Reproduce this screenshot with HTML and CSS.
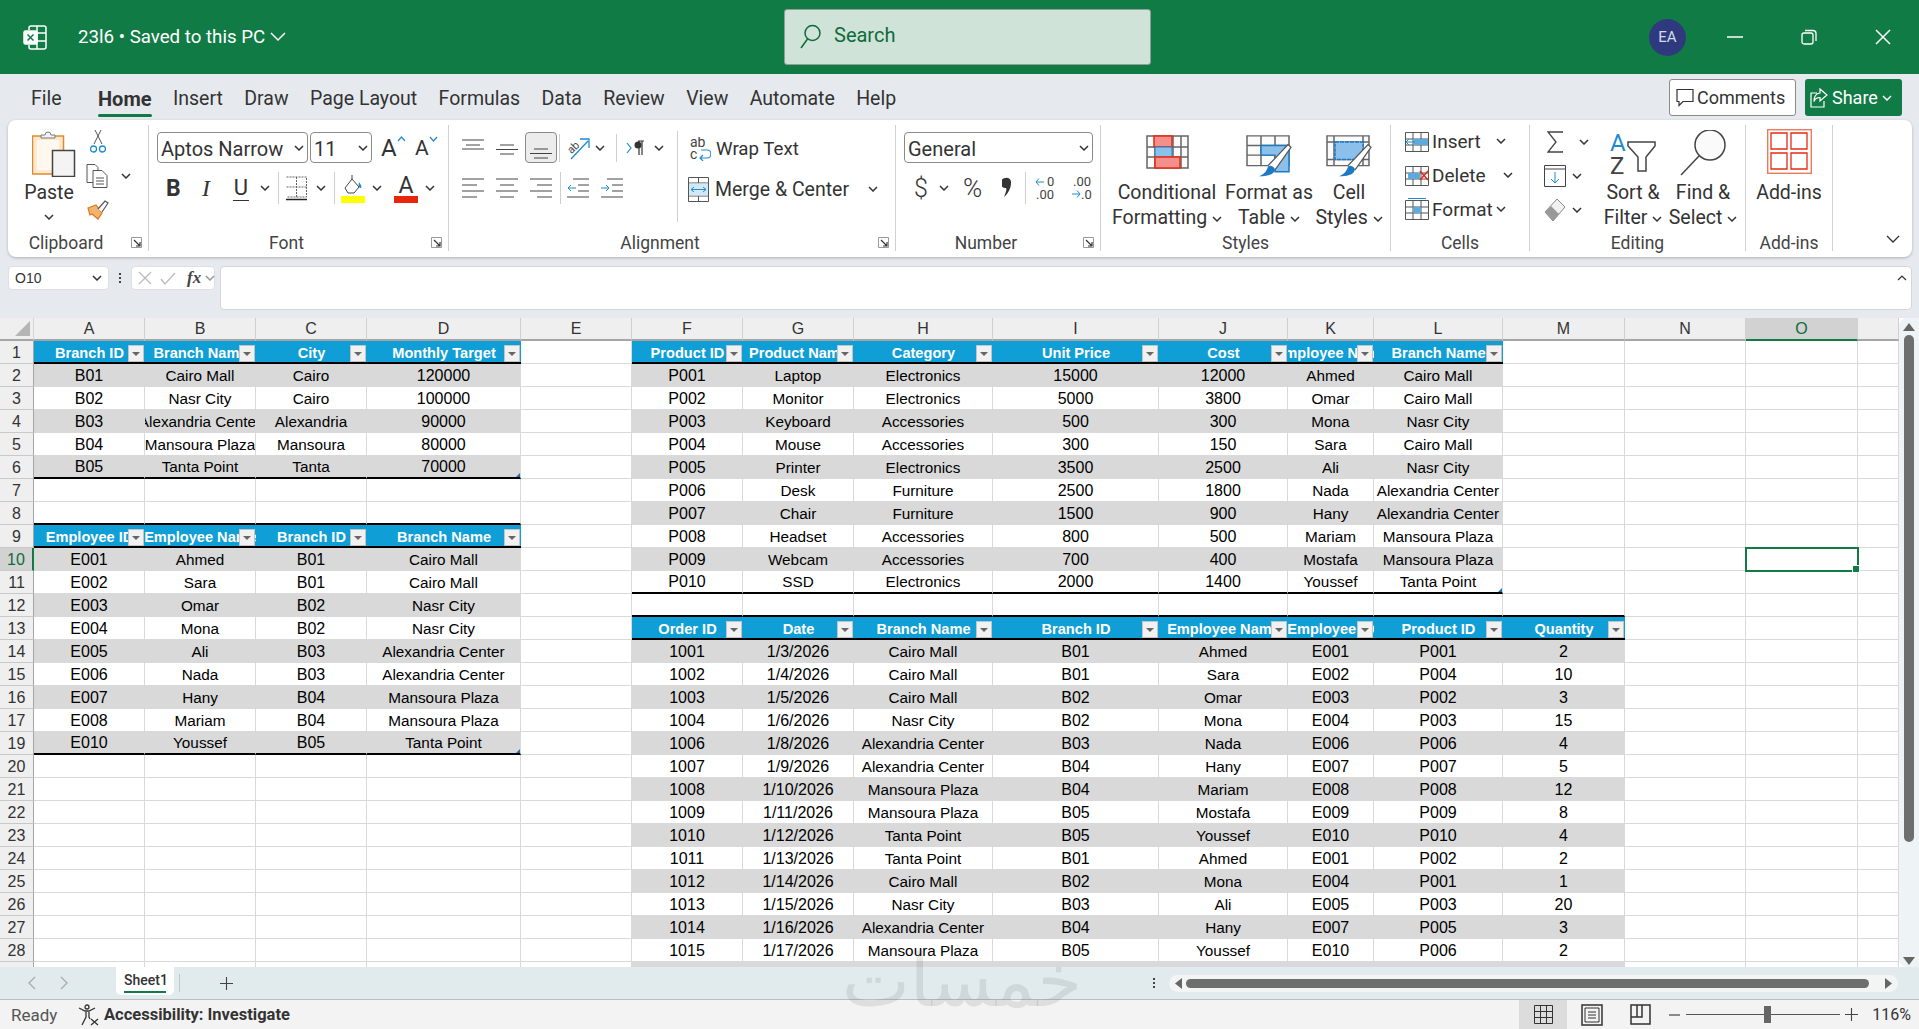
FILE: index.html
```html
<!DOCTYPE html>
<html lang="en">
<head>
    <meta charset="UTF-8">
    <meta name="viewport" content="width=device-width, initial-scale=1.0">
    <title>2316 - Excel</title>
    <link rel="stylesheet" href="styles.css">
</head>
<body>
    <svg class="sprite" xmlns="http://www.w3.org/2000/svg">
        <symbol id="chev" viewBox="0 0 10 6"><path d="M1 1l4 4 4-4" fill="none" stroke="#333" stroke-width="1.5"/></symbol>
        <symbol id="launch" viewBox="0 0 11 11"><path d="M.5 10.5V.5h10v10z" fill="none" stroke="#999"/><path d="M3 3l6 6M9 5v4H5" fill="none" stroke="#333" stroke-width="1.2"/></symbol>
        <symbol id="a-top" viewBox="0 0 22 11"><path d="M0 1h22M4 6h14" stroke="#444" fill="none"/><path d="M0 10h22" stroke="#444"/></symbol>
        <symbol id="a-mid" viewBox="0 0 22 11"><path d="M4 1h14M0 5.500h22M4 10h14" stroke="#444" fill="none"/></symbol>
        <symbol id="a-left" viewBox="0 0 22 20"><path d="M0 1h22M0 7h15M0 13h22M0 19h15" stroke="#444" fill="none"/></symbol>
        <symbol id="a-center" viewBox="0 0 22 20"><path d="M0 1h22M4 7h14M0 13h22M4 19h14" stroke="#444" fill="none"/></symbol>
        <symbol id="a-right" viewBox="0 0 22 20"><path d="M0 1h22M7 7h15M0 13h22M7 19h15" stroke="#444" fill="none"/></symbol>
        <symbol id="a-out" viewBox="0 0 22 20"><path d="M6 1h16M11 7h11M11 13h11M0 19h22" stroke="#444" fill="none"/><path d="M9 10H1M4 7l-3 3 3 3" stroke="#1e8bcd" fill="none"/></symbol>
        <symbol id="a-in" viewBox="0 0 22 20"><path d="M6 1h16M11 7h11M11 13h11M0 19h22" stroke="#444" fill="none"/><path d="M0 10h8M5 7l3 3-3 3" stroke="#1e8bcd" fill="none"/></symbol>
        <symbol id="grid-cell" viewBox="0 0 24 24"><path d="M.5 3.500h23v19H.5zM.5 10h23M.5 16h23M8 3.500v19M16 3.500v19" fill="#fff" stroke="#555"/></symbol>
    </svg>

    <header class="titlebar">
        <div class="title-left">
            <svg class="excel-logo" width="24" height="25" viewBox="0 0 24 25" fill="none" stroke="#fff" stroke-width="1.5"><path d="M6 5V3a2 2 0 0 1 2-2h13a2 2 0 0 1 2 2v19a2 2 0 0 1-2 2H8a2 2 0 0 1-2-2v-2M14 1v23M14 8h9M14 16h9"/><rect x="1" y="6" width="13" height="13" rx="1.500" fill="#fff"/><path d="M4.500 9.500l6 6M10.500 9.500l-6 6" stroke="#117b45"/></svg>
            <span class="doc-name">23l6 • Saved to this PC</span>
            <svg class="doc-chev" width="16" height="10" viewBox="0 0 16 10"><path d="M1 1l7 7 7-7" fill="none" stroke="#fff" stroke-width="1.500"/></svg>
        </div>
        <div class="search">
            <svg width="21" height="25" viewBox="0 0 21 25" fill="none" stroke="#0f6b3a" stroke-width="1.5"><circle cx="12.500" cy="9" r="7.500"/><path d="M7.500 15L1 24"/></svg>
            <span>Search</span>
        </div>
        <div class="title-right">
            <div class="avatar">EA</div>
            <svg class="min-btn" width="16" height="2"><path d="M0 1h16" stroke="#fff" stroke-width="1.500"/></svg>
            <svg class="win-btn" width="16" height="16" viewBox="0 0 16 16" fill="none" stroke="#fff" stroke-width="1.300"><rect x="1" y="4" width="11" height="11" rx="2"/><path d="M4 1.500h8a3 3 0 0 1 3 3V12"/></svg>
            <svg class="win-btn" width="16" height="16" viewBox="0 0 16 16"><path d="M1 1l14 14M15 1L1 15" stroke="#fff" stroke-width="1.500"/></svg>
        </div>
    </header>

    <nav class="tabs">
        <span class="tab tab-file">File</span>
        <span class="tab tab-active">Home</span>
        <span class="tab">Insert</span>
        <span class="tab">Draw</span>
        <span class="tab">Page Layout</span>
        <span class="tab">Formulas</span>
        <span class="tab">Data</span>
        <span class="tab">Review</span>
        <span class="tab">View</span>
        <span class="tab">Automate</span>
        <span class="tab">Help</span>
        <div class="tab-actions">
            <div class="btn-comments">
                <svg width="18" height="20" viewBox="0 0 18 20" fill="none" stroke="#333" stroke-width="1.200"><path d="M1 1.500h16v12H7l-4 4v-4H1z"/></svg>
                <span>Comments</span>
            </div>
            <div class="btn-share">
                <svg width="18" height="20" viewBox="0 0 18 20" fill="none" stroke="#fff" stroke-width="1.200"><path d="M7 5H1v14h13v-6M10 1l7 6-7 6V9.500c-3 0-5 1-6 4 0-5 2-8 6-8.500z"/></svg>
                <span>Share</span>
                <svg width="10" height="6"><use href="#chev" class="on-green"/></svg>
            </div>
        </div>
    </nav>

    <section class="ribbon">
        <div class="group g-clip launcher-group">
            <div class="group-body body-flat">
                <div class="big-btn paste">
                    <svg class="big-icon paste-icon" width="44" height="47" viewBox="0 0 44 47"><rect x=".5" y="6" width="31" height="38" fill="#fde9cf" stroke="#e08a2e" stroke-width="1.500"/><rect x="5" y="10" width="22" height="30" fill="#fff8ee"/><path d="M9 8V5h4a3 3 0 0 1 6 0h4v3z" fill="#f3f3f3" stroke="#777"/><rect x="20.500" y="20.500" width="22" height="26" fill="#f4f4f4" stroke="#444" stroke-width="1.500"/></svg>
                    <span>Paste</span>
                    <svg class="paste-chev" width="10" height="6"><use href="#chev"/></svg>
                </div>
                <div class="small-col">
                    <div class="small-row">
                        <svg class="ml10" width="16" height="24" viewBox="0 0 16 24" fill="none"><path d="M4 14L11 0M12 14L5 0" stroke="#555"/><circle cx="3.500" cy="19" r="3" stroke="#1e8bcd" stroke-width="1.300"/><circle cx="12.500" cy="19" r="3" stroke="#1e8bcd" stroke-width="1.300"/></svg>
                    </div>
                    <div class="small-row">
                        <svg class="ml6" width="22" height="24" viewBox="0 0 22 24" fill="#fff" stroke="#555"><path d="M1 .5h8l3 3v15H1z"/><path d="M7 6.500h9l5 5v12H7z"/><path d="M10 14h8M10 17h8M10 20h8"/></svg>
                        <svg class="ml13" width="10" height="6"><use href="#chev"/></svg>
                    </div>
                    <div class="small-row">
                        <svg class="ml7" width="22" height="20" viewBox="0 0 22 20" fill="none"><path d="M1 8l8-3 6 8-4 6-6-5-2 1z" fill="#f4b26f" stroke="#d9791f" stroke-width="1.200"/><path d="M11 9l7-8 3 2-6 9" fill="#fff" stroke="#555" stroke-width="1.200"/></svg>
                    </div>
                </div>
            </div>
            <div class="group-label">Clipboard<svg class="launcher" width="11" height="11"><use href="#launch"/></svg></div>
        </div>

        <div class="group g-font launcher-group">
            <div class="group-body">
                <div class="tool-row">
                    <div class="combo combo-font ml8"><span>Aptos Narrow</span><svg width="10" height="6"><use href="#chev"/></svg></div>
                    <div class="combo combo-size ml2"><span>11</span><svg width="10" height="6"><use href="#chev"/></svg></div>
                    <span class="grow-a ml9">A<svg class="mark" width="9" height="6" viewBox="0 0 9 6"><path d="M1 5l3.500-4L8 5" fill="none" stroke="#1e8bcd" stroke-width="1.200"/></svg></span>
                    <span class="shrink-a ml14">A<svg class="mark" width="9" height="6" viewBox="0 0 9 6"><path d="M1 1l3.500 4L8 1" fill="none" stroke="#1e8bcd" stroke-width="1.200"/></svg></span>
                </div>
                <div class="tool-row row-two">
                    <span class="glyph-b ml17">B</span>
                    <span class="glyph-i ml22">I</span>
                    <span class="glyph-u ml21">U</span>
                    <svg class="ml11" width="10" height="6"><use href="#chev"/></svg>
                    <i class="sep ml8"></i>
                    <svg class="ml7" width="21" height="25" viewBox="0 0 21 25" fill="none"><path d="M.5 1h20v20H.5M10.500 1v20M.5 11h20" stroke="#666" stroke-dasharray="2 1"/><path d="M0 23.500h21" stroke="#222" stroke-width="1.500"/></svg>
                    <svg class="ml9" width="10" height="6"><use href="#chev"/></svg>
                    <i class="sep ml8"></i>
                    <svg class="ml6" width="24" height="29" viewBox="0 0 24 29"><path d="M4 14l7-9 7 8-5 6H7z" fill="#fff" stroke="#444"/><path d="M11 5V1" stroke="#444"/><path d="M18 8c2 3 3 4 2 6-2 0-3-2-2-6z" fill="#1e8bcd"/><rect y="22" width="24" height="7" fill="#ff0"/></svg>
                    <svg class="ml7" width="10" height="6"><use href="#chev"/></svg>
                    <span class="glyph-color ml12">A</span>
                    <svg class="ml7" width="10" height="6"><use href="#chev"/></svg>
                </div>
            </div>
            <div class="group-label">Font<svg class="launcher" width="11" height="11"><use href="#launch"/></svg></div>
        </div>

        <div class="group g-align launcher-group">
            <div class="group-body body-flat">
                <div class="align-left">
                    <div class="tool-row">
                        <svg class="ml13 up8" width="22" height="11"><use href="#a-top"/></svg>
                        <svg class="ml12 down1" width="22" height="11"><use href="#a-mid"/></svg>
                        <div class="active-box ml7"><svg width="22" height="11"><use href="#a-mid"/></svg></div>
                        <i class="sep sep-short ml2"></i>
                        <svg class="ml7" width="23" height="24" viewBox="0 0 23 24" fill="none"><text x="1" y="14" class="ab-text" transform="rotate(-45 8 12)">ab</text><path d="M4 23L21 5M13 3h9v9" stroke="#1e8bcd" stroke-width="1.300"/></svg>
                        <svg class="ml5" width="10" height="6"><use href="#chev"/></svg>
                        <i class="sep sep-short ml11"></i>
                        <svg class="ml9" width="19" height="16" viewBox="0 0 19 16" fill="none"><path d="M1 3l4 5-4 5" stroke="#1e8bcd" stroke-width="1.200"/><path d="M12 1h6M13 1v14M16 1v14" stroke="#333" stroke-width="1.200"/><circle cx="12" cy="5" r="3.500" fill="#333"/></svg>
                        <svg class="ml9" width="10" height="6"><use href="#chev"/></svg>
                    </div>
                    <div class="tool-row row-two">
                        <svg class="ml13" width="22" height="20"><use href="#a-left"/></svg>
                        <svg class="ml12" width="22" height="20"><use href="#a-center"/></svg>
                        <svg class="ml12" width="22" height="20"><use href="#a-right"/></svg>
                        <i class="sep ml8"></i>
                        <svg class="ml6" width="22" height="20"><use href="#a-out"/></svg>
                        <svg class="ml12" width="22" height="20"><use href="#a-in"/></svg>
                    </div>
                </div>
                <i class="sep sep-tall"></i>
                <div class="align-right">
                    <div class="tool-row wrap-row">
                        <svg class="ml12" width="21" height="24" viewBox="0 0 21 24" fill="none"><text x="0" y="10" class="wrap-text">ab</text><text x="0" y="22" class="wrap-text">c</text><path d="M11 13h6a4 4 0 0 1 0 8h-6M13 18l-3 3 3 3" stroke="#1e8bcd" stroke-width="1.200"/></svg>
                        <span class="wrap-label ml5">Wrap Text</span>
                    </div>
                    <div class="tool-row merge-row">
                        <svg class="ml10" width="21" height="25" viewBox="0 0 21 25" fill="none"><path d="M.5.5h20v24H.5zM.5 6h20M.5 19h20M10.500.5V6M10.500 19v5" stroke="#555"/><rect x="1" y="6.500" width="19" height="12" fill="#d3e8f7"/><path d="M3 12.500h15M6 10l-3 2.500L6 15M15 10l3 2.500-3 2.500" stroke="#1e8bcd"/></svg>
                        <span class="merge-text ml6">Merge &amp; Center</span>
                        <svg class="ml17" width="10" height="6"><use href="#chev"/></svg>
                    </div>
                </div>
            </div>
            <div class="group-label">Alignment<svg class="launcher" width="11" height="11"><use href="#launch"/></svg></div>
        </div>

        <div class="group g-number launcher-group">
            <div class="group-body">
                <div class="tool-row">
                    <div class="combo combo-num ml8"><span>General</span><svg width="10" height="6"><use href="#chev"/></svg></div>
                </div>
                <div class="tool-row row-two">
                    <span class="glyph-num glyph-dollar ml18">$</span>
                    <svg class="ml14" width="10" height="6"><use href="#chev"/></svg>
                    <span class="glyph-num glyph-pct ml14">%</span>
                    <svg class="ml19" width="10" height="22" viewBox="0 0 10 22"><path d="M3 1a4.500 4.500 0 0 1 6 5c0 5-3 11-7 14 2-5 3-8 2-9a4.500 4.500 0 0 1-1-10z" fill="#333"/></svg>
                    <i class="sep ml13"></i>
                    <svg class="ml9" width="21" height="26" viewBox="0 0 21 26" fill="none"><path d="M9 7H1M4 3.500L1 7l3 3.500" stroke="#1e8bcd"/><text x="12" y="11" class="dec-text">0</text><text x="1" y="24" class="dec-text">.00</text></svg>
                    <svg class="ml15" width="21" height="26" viewBox="0 0 21 26" fill="none"><text x="2" y="11" class="dec-text">.00</text><path d="M1 19h8M6 15.500l3 3.500-3 3.500" stroke="#1e8bcd"/><text x="10" y="24" class="dec-text">.0</text></svg>
                </div>
            </div>
            <div class="group-label">Number<svg class="launcher" width="11" height="11"><use href="#launch"/></svg></div>
        </div>

        <div class="group g-styles">
            <div class="group-body big-row">
                <div class="big-btn btn-cond">
                    <svg class="big-icon mt3" width="43" height="34" viewBox="0 0 43 34" fill="none"><path d="M1 1h41v32H1zM1 12h41M1 22h41M9 1v32M27 1v32M35 1v32" stroke="#666" stroke-width="1.500" fill="#fbfbfb"/><rect x="8" y="1" width="18" height="11" fill="#f58f8a" stroke="#e52b13" stroke-width="1.500"/><rect x="9" y="12" width="17" height="10" fill="#8bc0ea" stroke="#1e78c2"/><rect x="9" y="22" width="25" height="11" fill="#f58f8a" stroke="#e52b13" stroke-width="1.500"/></svg>
                    <span>Conditional</span>
                    <span>Formatting <svg width="10" height="6"><use href="#chev"/></svg></span>
                </div>
                <div class="big-btn btn-format">
                    <svg class="big-icon mt3" width="46" height="42" viewBox="0 0 46 48" preserveAspectRatio="none" fill="none"><path d="M1 1h42v34H1zM1 12h42M1 23h42M15 1v34M29 1v34" stroke="#666" stroke-width="1.500" fill="#fbfbfb"/><path d="M15 12h28v30H29V23H15z" fill="#8bc0ea" stroke="#1e78c2" stroke-width="1.500"/><path d="M22 35l20-24 3 3-16 26" fill="#fff" stroke="#555" stroke-width="1.300"/><path d="M13 47c7 0 15-1 16-8-1-3-5-5-7-3-1 5-4 9-9 11z" fill="#1e78c2"/></svg>
                    <span>Format as</span>
                    <span>Table <svg width="10" height="6"><use href="#chev"/></svg></span>
                </div>
                <div class="big-btn btn-cell">
                    <svg class="big-icon mt3" width="46" height="42" viewBox="0 0 46 48" preserveAspectRatio="none" fill="none"><path d="M1 1h42v34H1zM1 8h42M1 28h42M8 1v34M37 1v34" stroke="#666" stroke-width="1.500" fill="#fbfbfb"/><rect x="9" y="8" width="28" height="20" fill="#8bc0ea" stroke="#1e78c2" stroke-width="1.500" stroke-dasharray="4 1"/><path d="M22 35l20-24 3 3-16 26" fill="#fff" stroke="#555" stroke-width="1.300"/><path d="M13 47c7 0 15-1 16-8-1-3-5-5-7-3-1 5-4 9-9 11z" fill="#1e78c2"/></svg>
                    <span>Cell</span>
                    <span>Styles <svg width="10" height="6"><use href="#chev"/></svg></span>
                </div>
            </div>
            <div class="group-label">Styles</div>
        </div>

        <div class="group g-cells">
            <div class="group-body body-list">
                <div class="small-row">
                    <svg class="ml14" width="24" height="24" viewBox="0 0 24 24"><use href="#grid-cell" width="24" height="24"/><rect x="8" y="10" width="15" height="6" fill="#5ea9dd"/><path d="M10 13H1M4 10l-3 3 3 3" fill="none" stroke="#1e8bcd"/></svg>
                    <span class="cell-text t-short ml3">Insert</span>
                    <svg width="10" height="6"><use href="#chev"/></svg>
                </div>
                <div class="small-row">
                    <svg class="ml14" width="24" height="24" viewBox="0 0 24 24"><use href="#grid-cell" width="24" height="24"/><rect x="3" y="10" width="12" height="6" fill="#5ea9dd"/><path d="M15 8l8 9M23 8l-8 9" fill="none" stroke="#e52b13" stroke-width="1.500"/></svg>
                    <span class="cell-text t-long ml3">Delete</span>
                    <svg width="10" height="6"><use href="#chev"/></svg>
                </div>
                <div class="small-row">
                    <svg class="ml14" width="24" height="24" viewBox="0 0 24 24"><use href="#grid-cell" width="24" height="24"/><rect x="8" y="10" width="8" height="6" fill="#5ea9dd"/><path d="M3 1.500h18" stroke="#1e8bcd"/></svg>
                    <span class="cell-text t-short ml3">Format</span>
                    <svg width="10" height="6"><use href="#chev"/></svg>
                </div>
            </div>
            <div class="group-label">Cells</div>
        </div>

        <div class="group g-edit">
            <div class="group-body body-flat">
                <div class="small-col col-edit">
                    <div class="small-row">
                        <svg class="ml17" width="16" height="22" viewBox="0 0 16 22" fill="none"><path d="M16 2V1H1l8 10-8 10h15v-1" stroke="#444" stroke-width="1.300"/></svg>
                        <svg class="ml16" width="10" height="6"><use href="#chev"/></svg>
                    </div>
                    <div class="small-row">
                        <svg class="ml14" width="22" height="22" viewBox="0 0 22 22" fill="none"><path d="M.5.5h21v21H.5zM.5 4h21" stroke="#444"/><path d="M11 7v11M7 14l4 4 4-4" stroke="#1e8bcd"/></svg>
                        <svg class="ml6" width="10" height="6"><use href="#chev"/></svg>
                    </div>
                    <div class="small-row">
                        <svg class="ml14" width="22" height="24" viewBox="0 0 22 24"><path d="M1 14L13 1l8 8L9 23z" fill="#f1f1f1" stroke="#888"/><path d="M1 14l6-6 8 8-6 7z" fill="#999"/></svg>
                        <svg class="ml6" width="10" height="6"><use href="#chev"/></svg>
                    </div>
                </div>
                <div class="big-btn btn-sort">
                    <svg class="big-icon up2" width="46" height="44" viewBox="0 0 46 44" fill="none"><text x="0" y="21" class="sort-a">A</text><text x="0" y="44" class="sort-z">Z</text><path d="M18 12h27v4l-9 11v14h-8V27l-10-11z" stroke="#444" stroke-width="1.500"/></svg>
                    <span>Sort &amp;</span>
                    <span>Filter <svg width="10" height="6"><use href="#chev"/></svg></span>
                </div>
                <div class="big-btn btn-find">
                    <svg class="big-icon up2" width="46" height="46" viewBox="0 0 46 46"><circle cx="30" cy="15" r="15" fill="#fafafa" stroke="#444" stroke-width="1.500"/><path d="M19 26L1 45" stroke="#444" stroke-width="1.500"/></svg>
                    <span>Find &amp;</span>
                    <span>Select <svg width="10" height="6"><use href="#chev"/></svg></span>
                </div>
            </div>
            <div class="group-label">Editing</div>
        </div>

        <div class="group g-addins">
            <div class="group-body big-row">
                <div class="big-btn btn-addins">
                    <svg class="big-icon up3" width="45" height="45" viewBox="0 0 45 45" fill="none"><rect x=".7" y=".7" width="43.600" height="43.600" stroke="#ec7a58" stroke-width="1.400"/><path d="M4 4h16v16H4zM24 4h16v16H24zM4 24h16v16H4zM24 24h16v16H24z" stroke="#e52b13" stroke-width="1.300"/></svg>
                    <span>Add-ins</span>
                </div>
            </div>
            <div class="group-label">Add-ins</div>
        </div>

        <div class="ribbon-end">
            <svg width="14" height="8" viewBox="0 0 14 8"><path d="M1 1l6 6 6-6" fill="none" stroke="#333" stroke-width="1.300"/></svg>
        </div>
    </section>

    <section class="formula-bar">
        <div class="name-box"><span>O10</span><svg width="10" height="6"><use href="#chev"/></svg></div>
        <div class="fx-dots"><i></i><i></i><i></i></div>
        <div class="fx-box">
            <svg width="14" height="14" viewBox="0 0 14 14"><path d="M1 1l12 12M13 1L1 13" stroke="#bbb" stroke-width="1.300"/></svg>
            <svg class="ml8" width="16" height="13" viewBox="0 0 16 13"><path d="M1 7l4 5L15 1" fill="none" stroke="#bbb" stroke-width="1.300"/></svg>
            <span class="fx-text">fx</span>
            <svg class="fx-chev" width="10" height="6"><use href="#chev"/></svg>
        </div>
        <div class="formula-input">
            <svg width="10" height="6" viewBox="0 0 10 6"><path d="M1 5l4-4 4 4" fill="none" stroke="#333" stroke-width="1.200"/></svg>
        </div>
    </section>

    <main class="sheet-wrap">
        <div class="sheet" id="sheet"></div>
        <div class="vscroll">
            <svg width="12" height="8" viewBox="0 0 12 8"><path d="M6 0l6 8H0z" fill="#666"/></svg>
            <div class="vthumb"></div>
            <svg class="vdown" width="12" height="8" viewBox="0 0 12 8"><path d="M6 8l6-8H0z" fill="#666"/></svg>
        </div>
    </main>

    <section class="sheet-tabs">
        <svg class="ml28" width="8" height="14" viewBox="0 0 8 14"><path d="M7 1L1 7l6 6" fill="none" stroke="#aaa" stroke-width="1.300"/></svg>
        <svg class="ml24" width="8" height="14" viewBox="0 0 8 14"><path d="M1 1l6 6-6 6" fill="none" stroke="#aaa" stroke-width="1.300"/></svg>
        <div class="sheet-tab"><span>Sheet1</span></div>
        <i class="tab-sep"></i>
        <svg class="tab-plus" width="13" height="13" viewBox="0 0 13 13"><path d="M6.500 0v13M0 6.500h13" stroke="#444" stroke-width="1.100"/></svg>
        <div class="fx-dots tab-dots"><i></i><i></i><i></i></div>
        <div class="hscroll">
            <svg width="7" height="11" viewBox="0 0 7 11"><path d="M0 5.500L7 0v11z" fill="#666"/></svg>
            <div class="hthumb"></div>
            <svg width="7" height="11" viewBox="0 0 7 11"><path d="M7 5.500L0 0v11z" fill="#666"/></svg>
        </div>
    </section>

    <footer class="statusbar">
        <span class="ready">Ready</span>
        <svg class="ml21" width="22" height="22" viewBox="0 0 22 22" fill="none" stroke="#333" stroke-width="1.300"><circle cx="9" cy="3" r="2"/><path d="M1 4l6 3h4l6-3M8 8v5l-4 8M11 8v5l1 2"/><path d="M13 15l7 6M20 15l-7 6"/></svg>
        <span class="a11y">Accessibility: Investigate</span>
        <div class="status-right">
            <div class="view-cell">
                <svg width="19" height="19" viewBox="0 0 19 19" fill="none" stroke="#333"><path d="M.5.5h18v18H.5zM6.500.5v18M12.500.5v18M.5 6.500h18M.5 12.500h18"/></svg>
            </div>
            <svg class="view-page" width="22" height="22" viewBox="0 0 22 22" fill="none" stroke="#333"><path d="M1 1h20v20H1z" stroke-width="1.500"/><path d="M4 4h14v14H4zM7 8h8M7 11h8M7 14h8"/></svg>
            <svg class="view-break" width="21" height="21" viewBox="0 0 21 21" fill="none" stroke="#333" stroke-width="1.500"><path d="M1 1h19v19H1zM1 13h11V1M7 1v12"/></svg>
            <svg class="zoom-minus" width="11" height="2"><path d="M0 1h11" stroke="#444" stroke-width="1.200"/></svg>
            <div class="zoom-track"><i></i></div>
            <svg class="zoom-plus" width="13" height="13" viewBox="0 0 13 13"><path d="M6.500 0v13M0 6.500h13" stroke="#444" stroke-width="1.100"/></svg>
            <span class="zoom-pct">116%</span>
        </div>
    </footer>

    <div class="watermark">خمسات</div>

    <script src="script.js"></script>
</body>
</html>
```

FILE: styles.css
```css
* {
    box-sizing: border-box;
}
html, body {
    margin: 0;
    height: 100%;
}
body {
    width: 1919px;
    height: 1029px;
    overflow: hidden;
    position: relative;
    display: flex;
    flex-direction: column;
    background: #e6eaee;
    color: #333;
    font-family: Roboto, sans-serif;
    font-size: 18px;
}
svg {
    flex: none;
    display: block;
}
i {
    display: block;
}
.sprite {
    position: absolute;
    width: 0;
    height: 0;
}
.on-green {
    filter: brightness(0) invert(1);
}

/* spacing helpers */
.ml2 { margin-left: 2px; }
.ml3 { margin-left: 3px; }
.ml5 { margin-left: 5px; }
.ml6 { margin-left: 6px; }
.ml7 { margin-left: 7px; }
.ml8 { margin-left: 8px; }
.ml9 { margin-left: 9px; }
.ml10 { margin-left: 10px; }
.ml11 { margin-left: 11px; }
.ml12 { margin-left: 12px; }
.ml13 { margin-left: 13px; }
.ml14 { margin-left: 14px; }
.ml15 { margin-left: 15px; }
.ml16 { margin-left: 16px; }
.ml17 { margin-left: 17px; }
.ml18 { margin-left: 18px; }
.ml19 { margin-left: 19px; }
.ml21 { margin-left: 21px; }
.ml22 { margin-left: 22px; }
.ml24 { margin-left: 24px; }
.ml28 { margin-left: 28px; }
.mt3 { margin-top: 3px; }
.up2 { margin-top: -2px; }
.up3 { margin-top: -3px; }
.up8 { margin-top: -6px; }
.down1 { margin-top: 4px; }

/* title bar */
.titlebar {
    flex: none;
    height: 74px;
    display: flex;
    align-items: center;
    background: #117b45;
    color: #fff;
}
.title-left {
    width: 784px;
    display: flex;
    align-items: center;
    padding-left: 23px;
}
.doc-name {
    margin-left: 31px;
    font-size: 18.7px;
}
.doc-chev {
    margin-left: 5px;
}
.search {
    width: 367px;
    height: 56px;
    margin-top: -1px;
    display: flex;
    align-items: center;
    padding-left: 15px;
    background: #cfe3d8;
    border: 1px solid #8f9f96;
    border-radius: 3px;
    color: #0f6b3a;
    font-size: 20px;
}
.search span {
    margin-left: 13px;
    margin-bottom: 3px;
}
.title-right {
    display: flex;
    align-items: center;
    margin-left: 498px;
}
.avatar {
    width: 37px;
    height: 37px;
    border-radius: 50%;
    background: #2f3a7e;
    display: flex;
    align-items: center;
    justify-content: center;
    font-size: 15px;
    color: #d5d9ee;
}
.min-btn {
    margin-left: 41px;
}
.win-btn {
    margin-left: 58px;
}

/* tabs */
.tabs {
    flex: none;
    height: 46px;
    display: flex;
    align-items: center;
    gap: 21.4px;
    padding-left: 31px;
    font-size: 19.5px;
}
.tab {
    position: relative;
    line-height: 46px;
    padding-top: 4px;
    color: #333;
}
.tab-file {
    margin-right: 15px;
}
.tab-active {
    font-weight: 700;
    font-size: 20px;
}
.tab-active::after {
    content: "";
    position: absolute;
    left: 0;
    right: 0;
    bottom: 5px;
    height: 3px;
    background: #117b45;
    border-radius: 2px;
}
.tab-actions {
    margin-left: auto;
    margin-right: 17px;
    display: flex;
    gap: 9px;
    padding-top: 1px;
    font-size: 18px;
}
.btn-comments, .btn-share {
    height: 37px;
    display: flex;
    align-items: center;
    border-radius: 3px;
}
.btn-comments {
    width: 127px;
    padding-left: 6px;
    background: #fff;
    border: 1px solid #8a8a8a;
    gap: 3px;
}
.btn-share {
    width: 97px;
    padding-left: 5px;
    background: #117b45;
    color: #fff;
    gap: 4px;
}

/* ribbon */
.ribbon {
    flex: none;
    height: 137px;
    width: 1904px;
    margin-left: 8px;
    padding: 5px 0 6px;
    display: flex;
    background: #fff;
    border-radius: 8px;
    box-shadow: 0 1px 3px rgba(0, 0, 0, 0.25);
}
.group {
    flex: none;
    display: flex;
    flex-direction: column;
    border-right: 1px solid #d0d0d0;
}
.g-clip { width: 141px; }
.g-font { width: 300px; }
.g-align { width: 447px; }
.g-number { width: 205px; }
.g-styles { width: 290px; }
.g-cells { width: 139px; }
.g-edit { width: 216px; }
.g-addins { width: 87px; }
.group-body {
    height: 107px;
    padding-top: 7px;
    font-size: 19.5px;
}
.body-flat {
    padding-top: 0;
    display: flex;
}
.body-list {
    padding-top: 0;
    margin-top: -1px;
    margin-bottom: 1px;
    font-size: 19px;
}
.big-row {
    display: flex;
}
.group-label {
    position: relative;
    height: 19px;
    line-height: 22px;
    text-align: center;
    font-size: 17.5px;
    color: #444;
    white-space: nowrap;
}
.launcher-group .group-label {
    padding-right: 24px;
}
.launcher {
    position: absolute;
    right: 6px;
    top: 5px;
}
.tool-row {
    display: flex;
    align-items: center;
    height: 31px;
}
.row-two {
    height: 32px;
    margin-top: 9px;
}
.combo {
    height: 31px;
    display: flex;
    align-items: center;
    justify-content: space-between;
    padding: 2px 3px 0 3px;
    border: 1px solid #8a8a8a;
    border-radius: 4px;
    font-size: 20px;
    flex: none;
}
.combo svg {
    margin-top: -2px;
}
.combo-font { width: 151px; }
.combo-size { width: 62px; }
.combo-num { width: 189px; }
.sep {
    width: 1px;
    height: 32px;
    background: #cfcfcf;
    flex: none;
}
.sep-short {
    height: 28px;
}
.sep-tall {
    height: 91px;
    margin-top: 6px;
}

/* font group glyphs */
.grow-a, .shrink-a {
    display: flex;
    align-items: flex-start;
    width: 20px;
    font-size: 24px;
    line-height: 26px;
}
.shrink-a {
    font-size: 21px;
}
.mark {
    margin-top: 1px;
}
.glyph-b {
    width: 14px;
    font-weight: 700;
    font-size: 23px;
}
.glyph-i {
    width: 10px;
    font-family: "Liberation Serif", serif;
    font-style: italic;
    font-size: 24px;
}
.glyph-u {
    width: 16px;
    font-size: 22px;
    line-height: 24px;
    border-bottom: 1px solid #333;
    text-align: center;
}
.glyph-color {
    width: 24px;
    height: 29px;
    text-align: center;
    font-size: 23px;
    line-height: 24px;
    border-bottom: 7px solid #e8260c;
}
.active-box {
    width: 32px;
    height: 31px;
    display: flex;
    align-items: flex-end;
    justify-content: center;
    padding-bottom: 3px;
    background: #ececec;
    border: 1px solid #8a8a8a;
    border-radius: 4px;
}

/* alignment */
.align-left {
    width: 228px;
    padding-top: 7px;
}
.align-right {
    padding-top: 7px;
}
.wrap-row {
    height: 32px;
    margin-top: 1px;
}
.wrap-label {
    font-size: 18.7px;
}
.merge-row {
    height: 32px;
    margin-top: 8px;
}
.merge-text {
    width: 136px;
    white-space: nowrap;
}
.ab-text {
    font-family: Roboto, sans-serif;
    font-size: 11px;
    fill: #444;
}
.wrap-text {
    font-family: Roboto, sans-serif;
    font-size: 14px;
    fill: #444;
}
.dec-text {
    font-family: Roboto, sans-serif;
    font-size: 13px;
    fill: #444;
}
.glyph-num {
    font-size: 26px;
    font-weight: 300;
}
.glyph-dollar {
    width: 11px;
    font-size: 25px;
}
.glyph-pct {
    width: 20px;
}

/* large buttons */
.big-btn {
    height: 98px;
    display: flex;
    flex-direction: column;
    align-items: center;
    line-height: 25px;
    white-space: nowrap;
}
.big-btn span svg {
    display: inline-block;
    vertical-align: middle;
}
.big-icon {
    margin-bottom: auto;
}
.big-btn > span:first-of-type {
    margin-top: auto;
}
.paste {
    width: 62px;
    margin-left: 10px;
    height: 107px;
    padding-top: 5px;
}
.paste-icon {
    margin-left: 9px;
}
.paste > span:first-of-type {
    margin-top: 0;
}
.paste .big-icon {
    margin-bottom: 3px;
}
.paste-chev {
    margin-top: 9px;
}
.btn-cond { width: 108px; margin-left: 12px; }
.btn-format { width: 96px; }
.btn-cell { width: 64px; }
.btn-sort { width: 66px; height: 105px; padding-top: 7px; }
.btn-find { width: 74px; height: 105px; padding-top: 7px; }
.btn-addins { width: 87px; }
.btn-addins > span:first-of-type {
    margin-bottom: 25px;
}

/* small button columns */
.small-col {
    width: 68px;
}
.col-edit {
    width: 70px;
}
.small-row {
    height: 34px;
    display: flex;
    align-items: center;
}
.t-short { width: 64px; }
.t-long { width: 71px; }

/* sort icon letters */
.sort-a {
    font-family: Roboto, sans-serif;
    font-size: 24px;
    fill: #1e8bcd;
}
.sort-z {
    font-family: Roboto, sans-serif;
    font-size: 24px;
    fill: #444;
}

.ribbon-end {
    flex: 1;
    display: flex;
    justify-content: flex-end;
    align-items: flex-end;
    padding: 0 12px 8px 0;
}

/* formula bar */
.formula-bar {
    flex: none;
    height: 44px;
    margin: 9px 7px 8px 8px;
    display: flex;
    align-items: flex-start;
}
.name-box, .fx-box {
    height: 24px;
    display: flex;
    align-items: center;
    background: #fff;
    border: 1px solid #dcdfe3;
    border-radius: 4px;
}
.name-box {
    width: 101px;
    justify-content: space-between;
    padding: 0 6px;
    font-family: "Liberation Sans", sans-serif;
    font-size: 14px;
}
.fx-dots {
    width: 22px;
    height: 24px;
    display: flex;
    flex-direction: column;
    align-items: center;
    justify-content: center;
    gap: 2px;
}
.fx-dots i {
    width: 2px;
    height: 2px;
    background: #444;
}
.fx-box {
    width: 84px;
    padding-left: 6px;
}
.fx-text {
    margin-left: 11px;
    font-family: "Liberation Serif", serif;
    font-style: italic;
    font-weight: 700;
    font-size: 17px;
    color: #444;
}
.fx-chev {
    margin-left: 4px;
    opacity: 0.5;
}
.formula-input {
    flex: 1;
    height: 44px;
    margin-left: 5px;
    display: flex;
    justify-content: flex-end;
    padding: 8px 4px 0 0;
    background: #fff;
    border: 1px solid #d3d6da;
    border-radius: 4px;
}

/* worksheet */
.sheet-wrap {
    flex: none;
    height: 649px;
    display: flex;
    background: #fff;
}
.sheet {
    flex: none;
    width: 1899px;
    display: grid;
    grid-template-columns: 34px 111px 111px 111px 154px 111px 111px 111px 139px 166px 129px 86px 129px 122px 121px 112px 41px;
    grid-auto-rows: 23px;
    overflow: hidden;
    font-family: "Liberation Sans", sans-serif;
    font-size: 15.3px;
    color: #000;
}
.cell {
    position: relative;
    display: flex;
    justify-content: center;
    align-items: center;
    overflow: hidden;
    white-space: nowrap;
    border-right: 1px solid #d9d9d9;
    border-bottom: 1px solid #d9d9d9;
    padding-top: 1px;
}
.cell span {
    flex: none;
}
.code {
    font-size: 16px;
}
.corner, .col-head, .row-head {
    background: #efefef;
    color: #333;
    font-size: 16px;
}
.corner {
    border-right: 1px solid #d5d5d5;
    border-bottom: 2px solid #a5a5a5;
}
.corner::after {
    content: "";
    position: absolute;
    right: 3px;
    bottom: 3px;
    border-left: 15px solid transparent;
    border-bottom: 15px solid #b5b5b5;
}
.col-head {
    border-right: 1px solid #d0d0d0;
    border-bottom: 2px solid #a5a5a5;
}
.row-head {
    border-right: 1px solid #a5a5a5;
    border-bottom: 1px solid #c9c9c9;
}
.col-on {
    background: #d2d2d2;
    color: #0f6b3a;
    border-bottom-color: #117b45;
}
.row-on {
    background: #d2d2d2;
    color: #0f6b3a;
    border-right: 2px solid #117b45;
}
.head {
    padding-top: 2px;
    background: #0f9ed5;
    color: #fff;
    font-weight: 700;
    font-size: 14.6px;
    border-right: 0;
    border-bottom: 2px solid #000;
}
.filter {
    position: absolute;
    top: 4px;
    right: 1px;
    width: 16px;
    height: 17px;
    background: #f1f1f1;
    border: 1px solid #c4c4c4;
}
.filter::after {
    content: "";
    position: absolute;
    left: 3px;
    top: 6px;
    border-left: 4px solid transparent;
    border-right: 4px solid transparent;
    border-top: 4px solid #666;
}
.band {
    background: #d9d9d9;
    border-color: #d9d9d9;
}
.last {
    border-bottom: 2px solid #000;
}
.above {
    border-bottom: 2px solid #000;
}
.resize::after {
    content: "";
    position: absolute;
    right: 0;
    bottom: 0;
    border-left: 4px solid transparent;
    border-bottom: 4px solid #1e70b8;
}
.selected {
    overflow: visible;
    outline: 2px solid #117b45;
    outline-offset: -1px;
    z-index: 2;
}
.selected::after {
    content: "";
    position: absolute;
    right: -3px;
    bottom: -3px;
    width: 6px;
    height: 6px;
    background: #117b45;
    border: 1px solid #fff;
}

/* scrollbars */
.vscroll {
    flex: 1;
    display: flex;
    flex-direction: column;
    align-items: center;
    padding-top: 5px;
    background: #eef3f5;
    border-radius: 8px 0 0 8px;
}
.vthumb {
    width: 10px;
    height: 507px;
    margin-top: 4px;
    background: #6e6e6e;
    border-radius: 5px;
}
.vdown {
    margin-top: auto;
    margin-bottom: 2px;
}
.sheet-tabs {
    flex: none;
    height: 32px;
    display: flex;
    align-items: center;
    background: #e1ebee;
}
.sheet-tab {
    width: 58px;
    height: 28px;
    margin-left: 48px;
    margin-top: -4px;
    padding: 5px 8px 0;
    background: #fff;
    border-radius: 0 0 5px 5px;
    font-size: 14px;
    font-weight: 500;
    text-align: center;
}
.sheet-tab span {
    display: block;
    height: 21px;
    border-bottom: 2px solid #117b45;
}
.tab-sep {
    width: 1px;
    height: 18px;
    margin-left: 5px;
    background: #c2c9cb;
}
.tab-plus {
    margin-left: 40px;
}
.tab-dots {
    margin-left: 910px;
}
.hscroll {
    width: 729px;
    height: 17px;
    margin-left: 4px;
    display: flex;
    align-items: center;
    padding: 0 6px;
    background: #f3f4f4;
    border-radius: 9px;
}
.hthumb {
    width: 683px;
    height: 9px;
    margin: 0 auto 0 4px;
    background: #6e6e6e;
    border-radius: 5px;
}

/* status bar */
.statusbar {
    flex: none;
    height: 30px;
    display: flex;
    align-items: center;
    background: #f3f3f3;
    border-top: 1px solid #bdbdbd;
    padding-left: 11px;
    font-size: 17px;
}
.ready {
    width: 46px;
    color: #555;
}
.a11y {
    margin-left: 4px;
    font-weight: 700;
    font-size: 16.5px;
}
.status-right {
    margin-left: auto;
    height: 100%;
    display: flex;
    align-items: center;
    padding-right: 8px;
}
.view-cell {
    width: 48px;
    height: 100%;
    display: flex;
    align-items: center;
    justify-content: center;
    background: #dcdcdc;
}
.view-page {
    margin-left: 14px;
}
.view-break {
    margin-left: 27px;
}
.zoom-minus {
    margin-left: 18px;
}
.zoom-track {
    position: relative;
    width: 154px;
    height: 1px;
    margin-left: 6px;
    background: #555;
}
.zoom-track i {
    position: absolute;
    left: 78px;
    top: -8px;
    width: 7px;
    height: 17px;
    background: #666;
}
.zoom-plus {
    margin-left: 5px;
}
.zoom-pct {
    margin-left: 14px;
    font-size: 16px;
}
.watermark {
    position: absolute;
    left: 842px;
    top: 962px;
    font-family: "DejaVu Sans", sans-serif;
    font-size: 72px;
    line-height: 38px;
    color: rgba(70, 70, 70, 0.12);
    pointer-events: none;
}
```

FILE: script.js
```js
const letters = 'ABCDEFGHIJKLMNOP'.split('');
// row 18 is hidden in the workbook
const rowNumbers = [];
for (let n = 1; n <= 29; n++) {
    if (n !== 18) rowNumbers.push(n);
}

const tables = [
    {
        col: 0, top: 0,
        head: ['Branch ID', 'Branch Name', 'City', 'Monthly Target'],
        rows: [
            ['B01', 'Cairo Mall', 'Cairo', '120000'],
            ['B02', 'Nasr City', 'Cairo', '100000'],
            ['B03', 'Alexandria Center', 'Alexandria', '90000'],
            ['B04', 'Mansoura Plaza', 'Mansoura', '80000'],
            ['B05', 'Tanta Point', 'Tanta', '70000']
        ]
    },
    {
        col: 0, top: 8,
        head: ['Employee ID', 'Employee Name', 'Branch ID', 'Branch Name'],
        rows: [
            ['E001', 'Ahmed', 'B01', 'Cairo Mall'],
            ['E002', 'Sara', 'B01', 'Cairo Mall'],
            ['E003', 'Omar', 'B02', 'Nasr City'],
            ['E004', 'Mona', 'B02', 'Nasr City'],
            ['E005', 'Ali', 'B03', 'Alexandria Center'],
            ['E006', 'Nada', 'B03', 'Alexandria Center'],
            ['E007', 'Hany', 'B04', 'Mansoura Plaza'],
            ['E008', 'Mariam', 'B04', 'Mansoura Plaza'],
            ['E010', 'Youssef', 'B05', 'Tanta Point']
        ]
    },
    {
        col: 5, top: 0,
        head: ['Product ID', 'Product Name', 'Category', 'Unit Price', 'Cost', 'Employee Name', 'Branch Name'],
        rows: [
            ['P001', 'Laptop', 'Electronics', '15000', '12000', 'Ahmed', 'Cairo Mall'],
            ['P002', 'Monitor', 'Electronics', '5000', '3800', 'Omar', 'Cairo Mall'],
            ['P003', 'Keyboard', 'Accessories', '500', '300', 'Mona', 'Nasr City'],
            ['P004', 'Mouse', 'Accessories', '300', '150', 'Sara', 'Cairo Mall'],
            ['P005', 'Printer', 'Electronics', '3500', '2500', 'Ali', 'Nasr City'],
            ['P006', 'Desk', 'Furniture', '2500', '1800', 'Nada', 'Alexandria Center'],
            ['P007', 'Chair', 'Furniture', '1500', '900', 'Hany', 'Alexandria Center'],
            ['P008', 'Headset', 'Accessories', '800', '500', 'Mariam', 'Mansoura Plaza'],
            ['P009', 'Webcam', 'Accessories', '700', '400', 'Mostafa', 'Mansoura Plaza'],
            ['P010', 'SSD', 'Electronics', '2000', '1400', 'Youssef', 'Tanta Point']
        ]
    },
    {
        col: 5, top: 12, open: true,
        head: ['Order ID', 'Date', 'Branch Name', 'Branch ID', 'Employee Name', 'Employee ID', 'Product ID', 'Quantity'],
        rows: [
            ['1001', '1/3/2026', 'Cairo Mall', 'B01', 'Ahmed', 'E001', 'P001', '2'],
            ['1002', '1/4/2026', 'Cairo Mall', 'B01', 'Sara', 'E002', 'P004', '10'],
            ['1003', '1/5/2026', 'Cairo Mall', 'B02', 'Omar', 'E003', 'P002', '3'],
            ['1004', '1/6/2026', 'Nasr City', 'B02', 'Mona', 'E004', 'P003', '15'],
            ['1006', '1/8/2026', 'Alexandria Center', 'B03', 'Nada', 'E006', 'P006', '4'],
            ['1007', '1/9/2026', 'Alexandria Center', 'B04', 'Hany', 'E007', 'P007', '5'],
            ['1008', '1/10/2026', 'Mansoura Plaza', 'B04', 'Mariam', 'E008', 'P008', '12'],
            ['1009', '1/11/2026', 'Mansoura Plaza', 'B05', 'Mostafa', 'E009', 'P009', '8'],
            ['1010', '1/12/2026', 'Tanta Point', 'B05', 'Youssef', 'E010', 'P010', '4'],
            ['1011', '1/13/2026', 'Tanta Point', 'B01', 'Ahmed', 'E001', 'P002', '2'],
            ['1012', '1/14/2026', 'Cairo Mall', 'B02', 'Mona', 'E004', 'P001', '1'],
            ['1013', '1/15/2026', 'Nasr City', 'B03', 'Ali', 'E005', 'P003', '20'],
            ['1014', '1/16/2026', 'Alexandria Center', 'B04', 'Hany', 'E007', 'P005', '3'],
            ['1015', '1/17/2026', 'Mansoura Plaza', 'B05', 'Youssef', 'E010', 'P006', '2'],
            ['', '', '', '', '', '', '', '']
        ]
    }
];

const cells = {};

function put(row, col, text, classes) {
    cells[row + ':' + col] = { text: text, classes: classes };
}

tables.forEach(function (t) {
    t.head.forEach(function (text, c) {
        put(t.top, t.col + c, text, 'head');
        if (t.top > 0) put(t.top - 1, t.col + c, '', 'above');
    });
    t.rows.forEach(function (row, r) {
        row.forEach(function (text, c) {
            let classes = r % 2 === 0 ? 'band' : '';
            // ids and numbers are set a little larger, their digits run wider
            if (/\d/.test(text)) classes += ' code';
            if (!t.open && r === t.rows.length - 1) {
                classes += ' last';
                if (c === row.length - 1) classes += ' resize';
            }
            put(t.top + 1 + r, t.col + c, text, classes);
        });
    });
});

function makeCell(text, classes) {
    const el = document.createElement('div');
    el.className = 'cell ' + classes;
    if (text !== '') {
        const span = document.createElement('span');
        span.textContent = text;
        el.appendChild(span);
    }
    if (classes.indexOf('head') === 0) {
        const btn = document.createElement('div');
        btn.className = 'filter';
        el.appendChild(btn);
    }
    return el;
}

const sheet = document.getElementById('sheet');

sheet.appendChild(makeCell('', 'corner'));
letters.forEach(function (letter) {
    const name = letter === 'P' ? '' : letter;
    sheet.appendChild(makeCell(name, letter === 'O' ? 'col-head col-on' : 'col-head'));
});

rowNumbers.forEach(function (n, r) {
    sheet.appendChild(makeCell(String(n), n === 10 ? 'row-head row-on' : 'row-head'));
    letters.forEach(function (letter, c) {
        const data = cells[r + ':' + c] || { text: '', classes: '' };
        let classes = data.classes;
        if (n === 10 && letter === 'O') classes += ' selected';
        sheet.appendChild(makeCell(data.text, classes));
    });
});
```
